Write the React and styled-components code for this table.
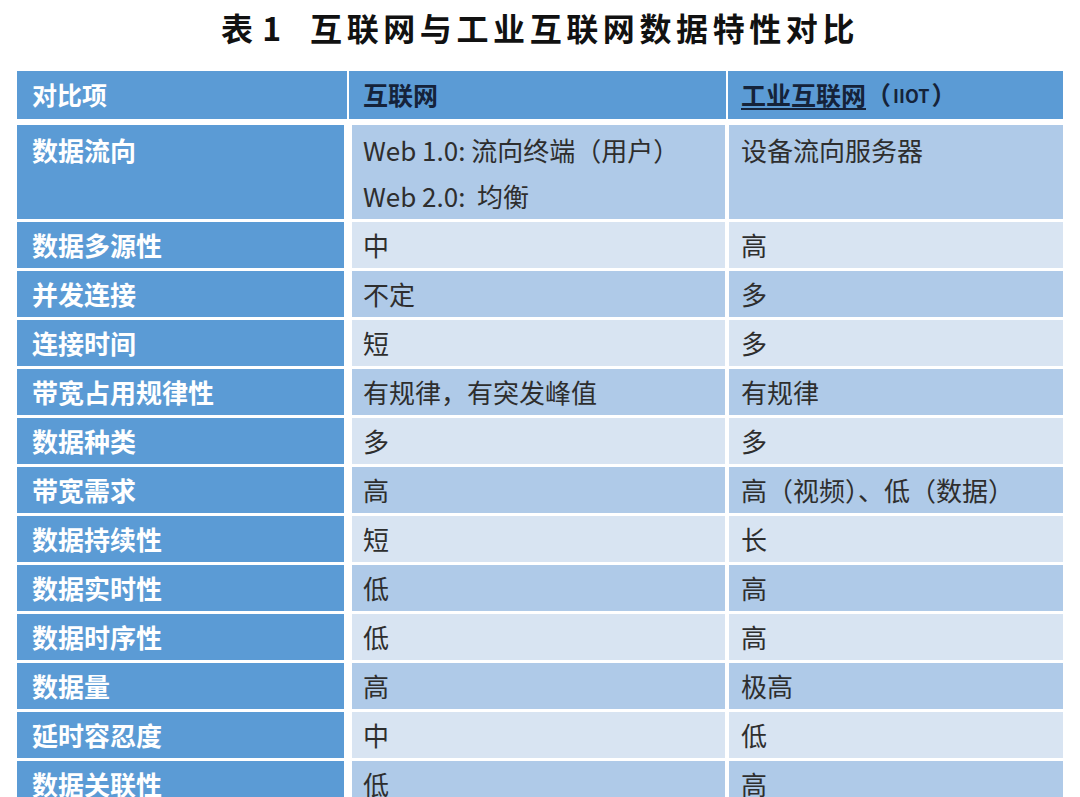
import React from 'react';
import styled, { createGlobalStyle } from 'styled-components';

const GlobalStyle = createGlobalStyle`
  html, body {
    margin: 0;
    padding: 0;
    background: #ffffff;
  }
  body {
    font-family: "Noto Sans CJK SC", "Noto Sans", sans-serif;
  }
`;

const rows = [
  { item: '数据流向', web: ['Web 1.0: 流向终端（用户）', 'Web 2.0:  均衡'], iiot: ['设备流向服务器'] },
  { item: '数据多源性', web: ['中'], iiot: ['高'] },
  { item: '并发连接', web: ['不定'], iiot: ['多'] },
  { item: '连接时间', web: ['短'], iiot: ['多'] },
  { item: '带宽占用规律性', web: ['有规律，有突发峰值'], iiot: ['有规律'] },
  { item: '数据种类', web: ['多'], iiot: ['多'] },
  { item: '带宽需求', web: ['高'], iiot: ['高（视频）、低（数据）'] },
  { item: '数据持续性', web: ['短'], iiot: ['长'] },
  { item: '数据实时性', web: ['低'], iiot: ['高'] },
  { item: '数据时序性', web: ['低'], iiot: ['高'] },
  { item: '数据量', web: ['高'], iiot: ['极高'] },
  { item: '延时容忍度', web: ['中'], iiot: ['低'] },
  { item: '数据关联性', web: ['低'], iiot: ['高'] },
];

const Page = styled.div`
  width: 1080px;
  height: 797px;
  overflow: hidden;
  background: #ffffff;
`;

const Title = styled.h1`
  margin: 0;
  height: 71px;
  display: flex;
  align-items: center;
  justify-content: center;
  padding-bottom: 18px;
  box-sizing: border-box;
  font-size: 32px;
  font-weight: 700;
  color: #111111;
  line-height: 1;
`;

const TitleNo = styled.span`
  margin-right: 28px;
  letter-spacing: 1px;
`;

const TitleText = styled.span`
  letter-spacing: 4.6px;
`;

const Table = styled.div`
  padding-left: 17px;
  width: 1046px;
  display: flex;
  flex-direction: column;
  gap: 3px;
`;

const HeadRow = styled.div`
  display: grid;
  grid-template-columns: 330px 377px 335px;
  column-gap: 2px;
  height: 47px;
  margin-bottom: 4px;
`;

const HeadCell = styled.div`
  background: #5b9bd5;
  color: ${p => (p.$light ? '#ffffff' : '#15233a')};
  font-size: 25px;
  font-weight: 700;
  line-height: 47px;
  padding-left: ${p => p.$pad}px;
  white-space: nowrap;
`;

const Link = styled.span`
  text-decoration: underline;
  text-decoration-thickness: 2px;
  text-underline-offset: 3px;
`;

const Small = styled.span`
  font-size: 18px;
  vertical-align: 2px;
  margin: 0 2px;
`;

const BodyRow = styled.div`
  display: grid;
  grid-template-columns: 327px 381px 338px;
  min-height: ${p => (p.$tall ? 92 : 46)}px;
`;

const ItemCell = styled.div`
  background: #5b9bd5;
  color: #ffffff;
  font-size: 26px;
  font-weight: 700;
  line-height: 46px;
  padding: ${p => (p.$tall ? 2 : 0)}px 0 0 15px;
  white-space: nowrap;
`;

const ValueCell = styled.div`
  background: ${p => (p.$dark ? '#afcae8' : '#d8e4f2')};
  color: #2e2e2e;
  font-size: 26px;
  font-weight: 400;
  line-height: 46px;
  padding: ${p => (p.$tall ? 2 : 0)}px 0 0 ${p => p.$pad}px;
  margin-left: ${p => p.$gap}px;
  white-space: pre;
`;

const Line = styled.div`
  height: 46px;
`;

export default function App() {
  return (
    <Page>
      <GlobalStyle />
      <Title>
        <TitleNo>表 1</TitleNo>
        <TitleText>互联网与工业互联网数据特性对比</TitleText>
      </Title>
      <Table>
        <HeadRow>
          <HeadCell $light $pad={15}>对比项</HeadCell>
          <HeadCell $pad={14}>互联网</HeadCell>
          <HeadCell $pad={13}>
            <Link>工业互联网</Link>（<Small>IIOT</Small>）
          </HeadCell>
        </HeadRow>
        {rows.map((r, i) => {
          const tall = r.web.length > 1;
          const dark = i % 2 === 0;
          return (
            <BodyRow key={r.item} $tall={tall}>
              <ItemCell $tall={tall}>{r.item}</ItemCell>
              <ValueCell $dark={dark} $tall={tall} $gap={8} $pad={11}>
                {r.web.map(t => <Line key={t}>{t}</Line>)}
              </ValueCell>
              <ValueCell $dark={dark} $tall={tall} $gap={4} $pad={12}>
                {r.iiot.map(t => <Line key={t}>{t}</Line>)}
              </ValueCell>
            </BodyRow>
          );
        })}
      </Table>
    </Page>
  );
}
